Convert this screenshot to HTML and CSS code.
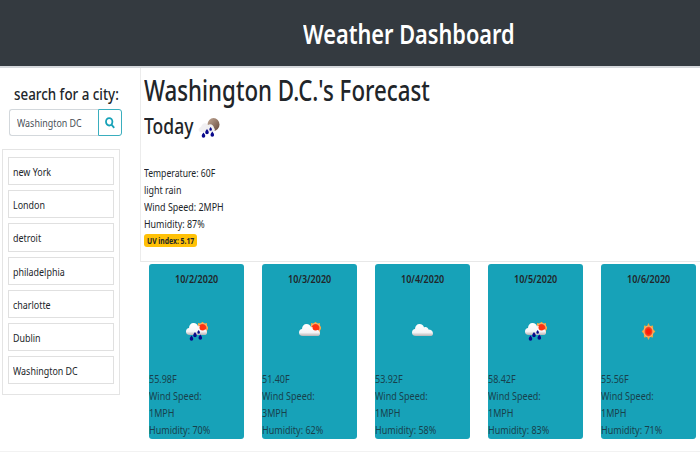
FILE: index.html
```html
<!DOCTYPE html>
<html lang="en">
<head>
<meta charset="utf-8">
<title>Weather Dashboard</title>
<link rel="stylesheet" href="styles.css">
</head>
<body>
<svg class="defs" aria-hidden="true">
  <defs>
    <radialGradient id="core"><stop offset="0.4" stop-color="#ff1c08"/><stop offset="0.7" stop-color="#f4481c"/><stop offset="1" stop-color="#fbc890"/></radialGradient>
    <linearGradient id="puff" x2="0" y2="1"><stop offset="0" stop-color="#fff"/><stop offset="0.7" stop-color="#f5f5f7"/><stop offset="1" stop-color="#b9b3b4"/></linearGradient>
    <linearGradient id="moon" x2="1" y2="1"><stop offset="0" stop-color="#c4ab98"/><stop offset="1" stop-color="#65483a"/></linearGradient>
    <path id="cloud" d="M4 13C1 13 0 11.5 0 9.500C0 7.500 1.500 6 3 6C3 3 5 1 7.500 1C10 1 11.500 2.500 12 4.500C14 3.500 16 4.500 16.500 6.500C19 6.500 21 8 21 10.500C21 12.500 20 13 18 13Z"/>
    <path id="drop" d="M0 0C1 1.500 1.800 2.300 1.800 3.500A1.800 1.800 0 0 1-1.800 3.500C-1.800 2.300-1 1.500 0 0Z" fill="#09098c"/>
    <g id="drops"><use href="#drop" x="5.500" y="13.500"/><use href="#drop" x="9" y="10"/><use href="#drop" x="12.700" y="8" transform="translate(3.500 2.200) scale(.72)"/><use href="#drop" x="14.300" y="12.500"/></g>
    <g id="sun"><path d="M0-7L1.500-4.500L4.500-5L4.600-2L6.800 0L4.600 2L4.500 5L1.500 4.500L0 7L-1.500 4.500L-4.500 5L-4.600 2L-6.800 0L-4.600-2L-4.500-5L-1.500-4.500Z" fill="#efa63c"/><circle r="4.800" fill="url(#core)"/></g>
  </defs>
</svg>
<header class="banner"><h1 class="t">Weather Dashboard</h1></header>
<main class="layout">
  <aside class="side">
    <h2 class="side-title"><span class="t">search for a city:</span></h2>
    <div class="search">
      <div class="field"><span class="t">Washington DC</span></div>
      <button class="go" aria-label="Search"><svg viewBox="0 0 10 12"><ellipse cx="4.200" cy="4.800" rx="3.200" ry="3.700"/><path d="M6.500 7.600L9.200 10.800"/></svg></button>
    </div>
    <ul class="history">
      <li><span class="t">new York</span></li>
      <li><span class="t">London</span></li>
      <li><span class="t">detroit</span></li>
      <li><span class="t">philadelphia</span></li>
      <li><span class="t">charlotte</span></li>
      <li><span class="t">Dublin</span></li>
      <li><span class="t">Washington DC</span></li>
    </ul>
  </aside>
  <section class="content">
    <div class="current">
      <h2 class="city"><span class="t">Washington D.C.'s Forecast</span></h2>
      <h3 class="today"><span class="t">Today</span><svg class="wx-now" viewBox="0 0 22 20"><ellipse cx="15.500" cy="6.500" rx="6" ry="6.500" fill="url(#moon)"/><path d="M3 14C0 14-.5 10 3 9C4 5 8 4 10 7C13 5 16 8 16 10C18 12 16 14 14 14Z" fill="#f1f0f2"/><use href="#drops" y="1"/></svg></h3>
      <div class="facts">
        <p class="temp"><span class="t">Temperature: 60F</span></p>
        <p><span class="t">light rain</span></p>
        <p><span class="t">Wind Speed: 2MPH</span></p>
        <p><span class="t">Humidity: 87%</span></p>
      </div>
      <div class="badge"><span class="t">UV index: 5.17</span></div>
    </div>
    <div class="cards">
      <article class="card"><h4><span class="t">10/2/2020</span></h4><svg class="wx" viewBox="0 0 22 20"><use href="#sun" x="16.500" y="6"/><use href="#cloud" fill="url(#puff)"/><circle cx="16.500" cy="5.500" r="3" fill="#ff3210"/><use href="#drops"/></svg><p><span class="t">55.98F</span></p><p><span class="t">Wind Speed:</span></p><p><span class="t">1MPH</span></p><p><span class="t">Humidity: 70%</span></p></article>
      <article class="card"><h4><span class="t">10/3/2020</span></h4><svg class="wx" viewBox="0 0 22 20"><use href="#sun" x="16.500" y="6"/><use href="#cloud" y="1" fill="url(#puff)"/><circle cx="16.500" cy="5.500" r="3" fill="#ff3210"/></svg><p><span class="t">51.40F</span></p><p><span class="t">Wind Speed:</span></p><p><span class="t">3MPH</span></p><p><span class="t">Humidity: 62%</span></p></article>
      <article class="card"><h4><span class="t">10/4/2020</span></h4><svg class="wx" viewBox="0 0 22 20"><use href="#cloud" y="1" fill="url(#puff)"/></svg><p><span class="t">53.92F</span></p><p><span class="t">Wind Speed:</span></p><p><span class="t">1MPH</span></p><p><span class="t">Humidity: 58%</span></p></article>
      <article class="card"><h4><span class="t">10/5/2020</span></h4><svg class="wx" viewBox="0 0 22 20"><use href="#sun" x="16.500" y="6"/><use href="#cloud" fill="url(#puff)"/><circle cx="16.500" cy="5.500" r="3" fill="#ff3210"/><use href="#drops"/></svg><p><span class="t">58.42F</span></p><p><span class="t">Wind Speed:</span></p><p><span class="t">1MPH</span></p><p><span class="t">Humidity: 83%</span></p></article>
      <article class="card"><h4><span class="t">10/6/2020</span></h4><svg class="wx" viewBox="0 0 22 20"><use href="#sun" transform="translate(10.500 9.500) scale(1 1.200)"/></svg><p><span class="t">55.56F</span></p><p><span class="t">Wind Speed:</span></p><p><span class="t">1MPH</span></p><p><span class="t">Humidity: 71%</span></p></article>
    </div>
  </section>
</main>
</body>
</html>
```
FILE: styles.css
```css
* { box-sizing: border-box; margin: 0; padding: 0; }
body { width: 700px; height: 452px; overflow: hidden; background: #fff; color: #212529; font: 11.500px/17px "Noto Sans", "Open Sans", sans-serif; }
.defs { position: absolute; width: 0; height: 0; }
.t { display: inline-block; white-space: nowrap; transform: scaleX(var(--sx, .775)); transform-origin: left center; }
.banner { height: 68px; padding-left: 303px; background: #343a40; border-bottom: 2px solid #d5d8dc; }
.banner h1 { --sx: .79; color: #fff; font-size: 27.500px; line-height: 67px; font-weight: 600; }
.layout { display: flex; height: 384px; border-bottom: 1px solid #f2f2f2; }
.side { width: 140px; padding: 14px 0 0 2px; }
.side-title { --sx: .81; padding-left: 12px; font-size: 16.500px; line-height: 24px; font-weight: 500; height: 27px; }
.search { display: flex; width: 113px; height: 27px; margin-left: 7px; }
.field { flex: none; width: 89px; border: 1px solid #d3d8dc; border-right: 0; border-radius: 3px 0 0 3px; padding-left: 7px; line-height: 26px; color: #495057; }
.go { flex: none; width: 24px; border: 1px solid #3aaebe; border-radius: 0 3px 3px 0; background: #fff; display: flex; align-items: center; justify-content: center; }
.go svg { width: 10px; height: 12px; fill: none; stroke: #17a2b8; stroke-width: 1.800; }
.history { list-style: none; width: 118px; height: 246px; margin-top: 13px; padding: 7px 5px; border: 1px solid #e4e4e4; display: flex; flex-direction: column; gap: 5px; }
.history li { height: 28.200px; border: 1px solid #e0e0e0; line-height: 27px; padding-left: 4px; }
.content { flex: 1; }
.current { height: 194px; padding: 2px 0 0 3px; border-left: 1px solid #ececec; border-bottom: 1px solid #e8e8e8; }
.city { --sx: .782; font-size: 28.500px; line-height: 40px; font-weight: 500; height: 38px; }
.today { --sx: .795; display: flex; font-size: 22px; line-height: 35px; font-weight: 500; height: 36px; }
.today .t { width: 54px; }
.wx-now { width: 22px; height: 20px; margin-top: 10px; }
.facts { padding-top: 20px; height: 90px; }
.facts .temp { --sx: .75; }
.badge { --sx: .8; width: 53px; height: 13px; background: #ffc107; border-radius: 3px; padding-left: 3px; font-size: 8.500px; font-weight: 700; line-height: 13px; }
.cards { --sx: .782; display: grid; grid-template-columns: repeat(5, 95px); gap: 18px; padding: 2px 0 0 9px; }
.card { height: 174.500px; background: #17a2b8; border-radius: 3px; padding-top: 6px; display: flex; flex-direction: column; }
.card h4 { padding-left: 26px; font-weight: 600; height: 52px; }
.wx { width: 22px; height: 20px; margin: 0 0 28px 36.500px; flex: none; }
.card p { color: #17414c; height: 17px; }
```
